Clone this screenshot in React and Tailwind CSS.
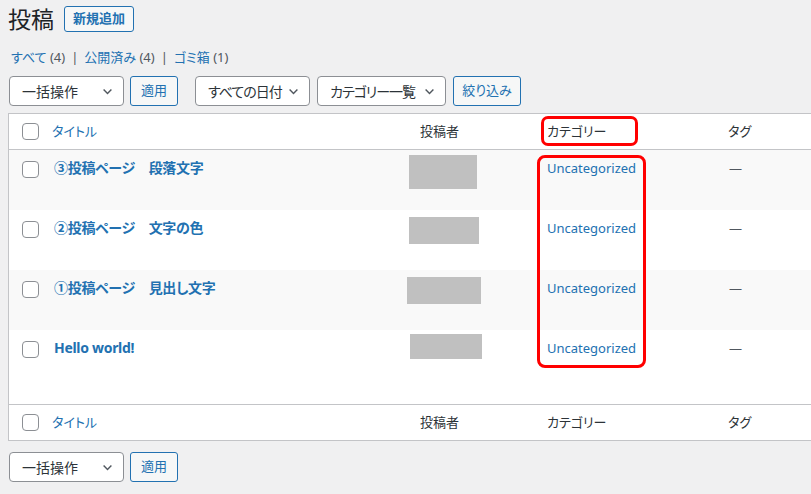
import React from "react";

// --- Posts list screen (WP admin style) ---

const fontStack = {
  fontFamily: '"Noto Sans", "Noto Sans CJK JP", sans-serif',
  fontFeatureSettings: '"palt"',
};

const posts = [
  { title: "③投稿ページ　段落文字", box: "ml-[-3px] mt-[5px] w-[68px] h-[34px]", striped: true },
  { title: "②投稿ページ　文字の色", box: "ml-[-3px] mt-[7px] w-[70px] h-[27px]", striped: false },
  { title: "①投稿ページ　見出し文字", box: "ml-[-5px] mt-[7px] w-[74px] h-[27px]", striped: true },
  { title: "Hello world!", box: "ml-[-2px] mt-[4px] w-[72px] h-[25px]", striped: false },
];

const Chevron = () => (
  <svg width="13" height="13" viewBox="0 0 20 20" className="shrink-0 text-[#50575e]">
    <polyline points="4,7 10,13 16,7" fill="none" stroke="currentColor" strokeWidth="2.2" />
  </svg>
);

const Select = ({ label, width, tight }) => (
  <div className={`${width} h-[30px] flex items-center justify-between pl-[12px] pr-[9px] bg-white border border-[#8c8f94] rounded-[4px] text-[14px] text-[#2c3338]`}>
    <span className={tight ? "tracking-[-1px]" : ""}>{label}</span>
    <Chevron />
  </div>
);

const Button = ({ label, width }) => (
  <div className={`${width} h-[30px] flex items-center justify-center bg-[#f6f7f7] border border-[#2271b1] rounded-[3px] text-[13px] text-[#2271b1]`}>
    {label}
  </div>
);

const Checkbox = () => (
  <div className="w-[17px] h-[17px] bg-white border border-[#8c8f94] rounded-[4px]" />
);

const HeaderRow = ({ top }) => (
  <div className={`flex h-[36px] items-center text-[13px] text-[#2c3338] bg-white ${top ? "border-b" : "border-t"} border-[#c3c4c7]`}>
    <div className="w-[35px] flex justify-end pr-[5px]"><Checkbox /></div>
    <div className="w-[368px] pl-[8px] text-[#2271b1]">タイトル</div>
    <div className="w-[127px] pl-[8px]">投稿者</div>
    <div className="w-[181px] pl-[8px]">カテゴリー</div>
    <div className="flex-1 pl-[8px]">タグ</div>
  </div>
);

export default function App() {
  return (
    <div className="relative w-[811px] h-[494px] overflow-hidden bg-[#f0f0f1] pl-[8px]" style={fontStack}>
      {/* Heading */}
      <div className="pt-[6px] flex items-center h-[32px] gap-[10px]">
        <h1 className="text-[23px] leading-[26px] text-[#1d2327] font-normal">投稿</h1>
        <div className="h-[26px] px-[8px] flex items-center bg-[#f6f7f7] border border-[#2271b1] rounded-[3px] text-[13px] font-bold text-[#2271b1]">
          新規追加
        </div>
      </div>

      {/* Status links */}
      <div className="mt-[16px] h-[20px] pl-[3px] flex items-center text-[13px] text-[#50575e] gap-[6px]">
        <span><span className="text-[#2271b1]">すべて</span> (4)</span>
        <span className="text-[#50575e]">|</span>
        <span><span className="text-[#2271b1]">公開済み</span> (4)</span>
        <span className="text-[#50575e]">|</span>
        <span><span className="text-[#2271b1]">ゴミ箱</span> (1)</span>
      </div>

      {/* Top toolbar */}
      <div className="mt-[8px] flex items-center pl-[1px]">
        <Select label="一括操作" width="w-[115px]" />
        <div className="ml-[6px]"><Button label="適用" width="w-[48px]" /></div>
        <div className="ml-[17px]"><Select label="すべての日付" width="w-[115px]" tight /></div>
        <div className="ml-[7px]"><Select label="カテゴリー一覧" width="w-[129px]" tight /></div>
        <div className="ml-[7px]"><Button label="絞り込み" width="w-[68px]" /></div>
      </div>

      {/* Posts table */}
      <div className="mt-[7px] w-[830px] bg-white border border-[#c3c4c7]">
        <HeaderRow top />
        <div className="h-[254px]">
          {posts.map((p) => (
            <div key={p.title} className={`flex h-[60px] ${p.striped ? "bg-[#f9f9f9]" : "bg-white"}`}>
              <div className="w-[35px] flex justify-end pr-[5px] pt-[11px]"><Checkbox /></div>
              <div className="w-[368px] pl-[10px] pt-[8px] text-[14px] leading-[20px] font-bold tracking-[-0.3px] text-[#2271b1]">{p.title}</div>
              <div className="w-[127px]">
                <div className={`${p.box} bg-[#c0c0c0]`} />
              </div>
              <div className="w-[181px] pl-[8px] pt-[8px] text-[13px] leading-[20px] text-[#2271b1]">Uncategorized</div>
              <div className="flex-1 pl-[9px] pt-[8px] text-[13px] leading-[20px] text-[#50575e]">—</div>
            </div>
          ))}
        </div>
        <HeaderRow />
      </div>

      {/* Bottom toolbar */}
      <div className="mt-[11px] flex items-center pl-[1px]">
        <Select label="一括操作" width="w-[115px]" />
        <div className="ml-[6px]"><Button label="適用" width="w-[48px]" /></div>
      </div>

      {/* Red annotation frames */}
      <div className="absolute left-[541px] top-[116px] w-[97px] h-[30px] border-[3px] border-[#ff0000] rounded-[7px]" />
      <div className="absolute left-[537px] top-[155px] w-[109px] h-[213px] border-[3px] border-[#ff0000] rounded-[8px]" />
    </div>
  );
}
